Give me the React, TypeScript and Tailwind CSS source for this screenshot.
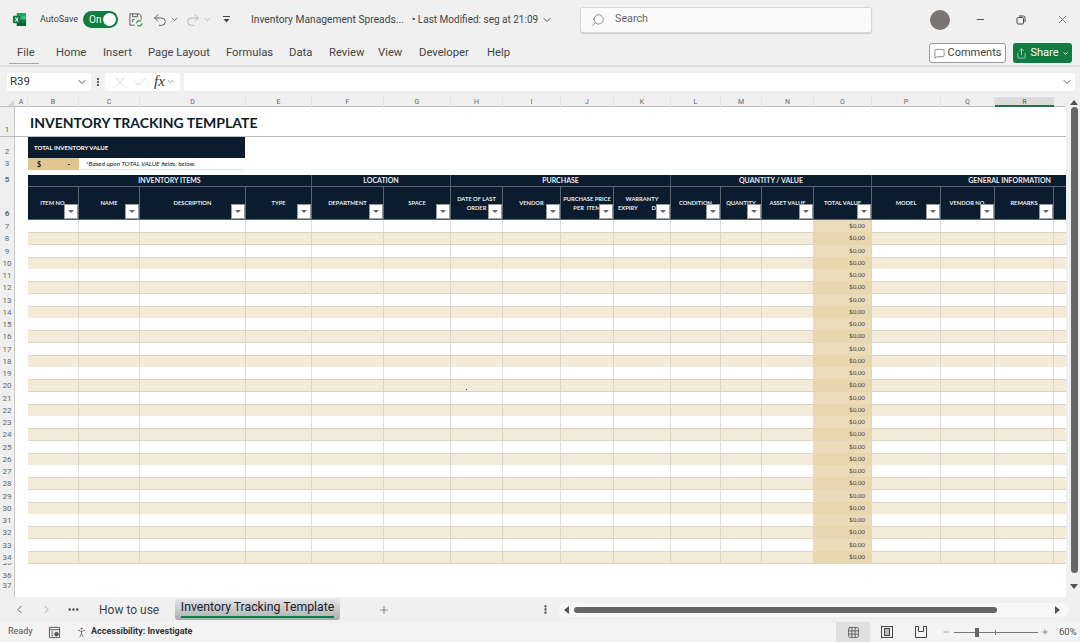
import {
  ChevronDown,
  ChevronLeft,
  ChevronRight,
  Check,
  Ellipsis,
  EllipsisVertical,
  Grid3x3,
  Minus,
  MessageSquare,
  PersonStanding,
  Plus,
  Redo2,
  Search,
  Share,
  Undo2,
  X,
} from 'lucide-react';

const ui = "font-['Roboto',sans-serif]";
const sheet = "font-['Lato',sans-serif]";
const cols =
  'grid grid-cols-[15px_13px_51px_61px_106px_66px_72px_67px_52px_58px_53px_57px_50px_41px_52px_58px_69px_54px_59px_12px]';

const letters = ['A', 'B', 'C', 'D', 'E', 'F', 'G', 'H', 'I', 'J', 'K', 'L', 'M', 'N', 'O', 'P', 'Q', 'R'];

const headers = [
  ['ITEM NO.'],
  ['NAME'],
  ['DESCRIPTION'],
  ['TYPE'],
  ['DEPARTMENT'],
  ['SPACE'],
  ['DATE OF LAST', 'ORDER'],
  ['VENDOR'],
  ['PURCHASE PRICE', 'PER  ITEM'],
  ['WARRANTY', 'EXPIRY          DATE'],
  ['CONDITION'],
  ['QUANTITY'],
  ['ASSET VALUE'],
  ['TOTAL VALUE'],
  ['MODEL'],
  ['VENDOR NO.'],
  ['REMARKS'],
];

const rowNumbers = Array.from({ length: 28 }, (_, i) => i + 7);

const RowNo = ({ n }: { n?: number }) => (
  <div className={`flex items-end justify-center overflow-hidden border-r border-[#c8c8c8] bg-[#efefef] pb-[1px] text-[8px] leading-[10px] text-[#666] ${ui}`}>
    {n}
  </div>
);

const FilterButton = () => (
  <span className="absolute bottom-0 right-0 flex h-[15px] w-[14px] items-center justify-center border border-[#9a9a9a] bg-white">
    <span className="h-0 w-0 border-x-[3px] border-t-[3px] border-x-transparent border-t-[#666]" />
  </span>
);

const ExcelLogo = () => (
  <svg width="15" height="15" viewBox="0 0 16 16">
    <path d="M5 1h9.5a.5.5 0 0 1 .5.5V8H5z" fill="#21a366" />
    <path d="M5 8h10v6.5a.5.5 0 0 1-.5.5H5z" fill="#0e5c2f" />
    <path d="M10 4.5h5V8h-5z" fill="#33c481" />
    <path d="M10 8h5v3.5h-5z" fill="#107c41" />
    <rect x="1" y="4" width="8" height="8" rx="1" fill="#107c41" />
    <path d="M3 5.8h1.2L5 7.2l.8-1.4H7L5.7 8 7 10.2H5.8L5 8.8l-.8 1.4H3L4.3 8z" fill="#fff" />
  </svg>
);

const SaveIcon = () => (
  <svg width="15" height="15" viewBox="0 0 16 16" fill="none" stroke="#555" strokeWidth="1">
    <path d="M7 14H2V2h10l2 2v4" />
    <path d="M5 2v3h5V2M5 11V8h2" />
    <path d="M9 12a3 3 0 0 1 5-2M15 12a3 3 0 0 1-5 2" stroke="#2f9e44" strokeWidth="1.3" />
  </svg>
);

const CustomizeIcon = () => (
  <svg width="9" height="9" viewBox="0 0 9 9" fill="none" stroke="#444">
    <path d="M1 1.5h7" />
    <path d="M1.5 4h6L4.5 7.5z" fill="#444" stroke="none" />
  </svg>
);

const RestoreIcon = () => (
  <svg width="10" height="10" viewBox="0 0 10 10" fill="none" stroke="#444">
    <rect x="1" y="2.5" width="6.5" height="6.5" rx="1.2" />
    <path d="M3 1h4.5A1.5 1.5 0 0 1 9 2.5V7" />
  </svg>
);

const MacroIcon = () => (
  <svg width="13" height="13" viewBox="0 0 14 14" fill="none" stroke="#555">
    <path d="M1.5 1.5h11v11h-11zM1.5 4h11" />
    <path d="M3.5 6.5h2M3.5 8.5h2M3.5 10.5h2" />
    <circle cx="9.2" cy="8.8" r="2" fill="#555" />
  </svg>
);

const PageLayoutIcon = () => (
  <svg width="14" height="14" viewBox="0 0 14 14" fill="none" stroke="#444">
    <rect x="1.5" y="1.5" width="11" height="11" />
    <rect x="4.5" y="3.5" width="5" height="7" fill="#bbb" />
  </svg>
);

const PageBreakIcon = () => (
  <svg width="14" height="14" viewBox="0 0 14 14" fill="none" stroke="#444">
    <path d="M1.5 12.5v-11h3v5h5v-5h3v11z" />
  </svg>
);

export default function App() {
  return (
    <div className={`flex h-[642px] w-[1080px] flex-col overflow-hidden bg-[#f0f0f0] text-[#333] ${ui}`}>
      {/* title bar */}
      <div className="flex h-[38px] shrink-0 items-center pt-[1px]">
        <span className="ml-[12px] w-[28px]"><ExcelLogo /></span>
        <span className="w-[43px] text-[9px] text-[#444]">AutoSave</span>
        <span className="flex h-[17px] w-[35px] items-center justify-between rounded-full bg-[#107c41] pl-[6px] pr-[2px] text-[10px] text-white">
          On
          <span className="h-[13px] w-[13px] rounded-full bg-white" />
        </span>
        <span className="ml-[10px] w-[17px]"><SaveIcon /></span>
        <Undo2 className="ml-[7px] h-[16px] w-[16px] text-[#444]" strokeWidth={1.2} />
        <ChevronDown className="ml-[2px] h-[9px] w-[9px] text-[#444]" />
        <Redo2 className="ml-[6px] h-[16px] w-[16px] text-[#aaa]" strokeWidth={1.2} />
        <ChevronDown className="ml-[2px] h-[9px] w-[9px] text-[#aaa]" />
        <span className="ml-[10px]"><CustomizeIcon /></span>
        <span className="ml-[20px] w-[161px] whitespace-nowrap text-[10.25px] text-[#444]">Inventory Management Spreads...</span>
        <span className="w-[129px] whitespace-nowrap text-[10px] text-[#444]">• Last Modified: seg at 21:09</span>
        <ChevronDown className="h-[12px] w-[12px] text-[#444]" />
        <div className="ml-[27px] flex h-[26px] w-[292px] items-center rounded-[3px] border border-[#d8d8d8] bg-[#fafafa] pl-[10px] text-[10.75px] text-[#666] shadow-[0_1px_1px_#ccc]">
          <Search className="h-[14px] w-[14px] -scale-x-100 text-[#666]" strokeWidth={1.2} />
          <span className="ml-[10px]">Search</span>
        </div>
        <span className="ml-[58px] h-[20px] w-[20px] rounded-full bg-[#7a7472]" />
        <Minus className="ml-[25px] h-[11px] w-[11px] text-[#444]" />
        <span className="ml-[30px]"><RestoreIcon /></span>
        <X className="ml-[30px] h-[13px] w-[13px] text-[#444]" strokeWidth={1.3} />
      </div>

      {/* ribbon tabs */}
      <div className="flex h-[28px] shrink-0 items-center border-b border-[#dcdcdc] pt-[3px] text-[11.25px] text-[#444] shadow-[0_1px_2px_#ddd]">
        <span className="relative ml-[17px] w-[39px] whitespace-nowrap">
          File
          <span className="absolute -left-[8px] right-[17px] -bottom-[3px] h-[1px] bg-[#aaa]" />
        </span>
        <span className="w-[47px]">Home</span>
        <span className="w-[45px]">Insert</span>
        <span className="w-[78px]">Page Layout</span>
        <span className="w-[63px]">Formulas</span>
        <span className="w-[40px]">Data</span>
        <span className="w-[49px]">Review</span>
        <span className="w-[41px]">View</span>
        <span className="w-[68px]">Developer</span>
        <span>Help</span>
        <div className="ml-auto mr-[8px] -mt-[1px] flex items-center gap-[7px]">
          <span className="flex h-[20px] w-[77px] items-center justify-center gap-[3px] rounded-[3px] border border-[#999] bg-white pt-[1px] text-[11px]">
            <MessageSquare className="h-[11px] w-[11px]" strokeWidth={1.3} />
            Comments
          </span>
          <span className="flex h-[20px] w-[59px] items-center justify-center gap-[3px] rounded-[3px] bg-[#107c41] pt-[1px] text-[11px] text-white">
            <Share className="h-[11px] w-[11px]" strokeWidth={1.3} />
            Share
            <ChevronDown className="h-[7px] w-[7px]" strokeWidth={3} />
          </span>
        </div>
      </div>

      {/* formula bar */}
      <div className="flex h-[31px] shrink-0 items-center pl-[7px] pr-[5px]">
        <div className="flex h-[18px] w-[84px] items-center justify-between rounded-[2px] bg-white pl-[3px] pr-[3px] text-[11.5px] text-[#333]">
          R39
          <ChevronDown className="h-[12px] w-[12px] text-[#555]" />
        </div>
        <EllipsisVertical className="mx-[2px] h-[10px] w-[10px] text-[#333]" strokeWidth={3} />
        <div className="flex h-[18px] w-[75px] items-center rounded-[2px] bg-white pl-[7px]">
          <X className="h-[16px] w-[16px] text-[#c4c4c4]" strokeWidth={1} />
          <Check className="ml-[4px] h-[16px] w-[16px] text-[#c4c4c4]" strokeWidth={1} />
          <span className="ml-[6px] font-['Liberation_Serif',serif] text-[15px] italic text-[#333]">fx</span>
          <ChevronDown className="ml-[1px] h-[9px] w-[9px] text-[#777]" />
        </div>
        <div className="ml-[4px] flex h-[18px] flex-1 items-center justify-end rounded-[2px] bg-white pr-[2px]">
          <ChevronDown className="h-[12px] w-[12px] text-[#555]" />
        </div>
      </div>

      {/* sheet */}
      <div className="flex h-[500px] shrink-0 overflow-hidden">
        <div className="flex w-[1066px] flex-col overflow-hidden bg-white">
          <div className={`${cols} h-[10px] shrink-0 border-b border-[#c0c0c0] bg-[#efefef] text-[7px] leading-[10px] text-[#666]`}>
            <span className="flex items-end justify-end pb-[1px] pr-[1px]">
              <span className="h-0 w-0 border-b-[6px] border-l-[6px] border-b-[#d4d4d4] border-l-transparent" />
            </span>
            {letters.map((l) => (
              <span
                key={l}
                className={l === 'R' ? 'h-[10px] border-b-2 border-[#217346] bg-[#dcdcdc] text-center text-[#217346]' : 'border-r border-[#e2e2e2] text-center'}
              >
                {l}
              </span>
            ))}
            <span />
          </div>

          <div className={`${sheet} text-[#0a1c2e]`}>
            <div className={`${cols} h-[30px] border-b border-[#bdbdbd]`}>
              <RowNo n={1} />
              <div className="col-span-19 flex items-center pl-[15px] pt-[1px] text-[14px] font-bold">
                INVENTORY TRACKING TEMPLATE
              </div>
            </div>
            <div className={`${cols} h-[21px]`}>
              <RowNo n={2} />
              <span />
              <div className="col-span-3 mr-[1px] flex items-center bg-[#0a1c2e] pl-[6px] text-[6px] font-bold text-white">
                TOTAL INVENTORY VALUE
              </div>
            </div>
            <div className={`${cols} h-[12px]`}>
              <RowNo n={3} />
              <span />
              <div className="flex items-center justify-between bg-[#dfc58f] pl-[9px] pr-[9px] text-[7px] font-bold">
                <span>$</span>
                <span>-</span>
              </div>
              <div className="col-span-2 mr-[1px] flex items-center whitespace-nowrap border-b border-[#e4e4e4] pl-[7px] text-[6.5px] italic">
                *Based upon TOTAL VALUE fields, below.
              </div>
            </div>
            <div className={`${cols} h-[5px]`}>
              <RowNo />
            </div>

            <div className={`${cols} h-[11px] text-[7px] font-bold leading-[11px] text-[#e8edf2]`}>
              <RowNo n={5} />
              <span />
              <div className="col-span-4 border-r border-[#4d5a68] bg-[#0a1c2e] text-center">INVENTORY ITEMS</div>
              <div className="col-span-2 border-r border-[#4d5a68] bg-[#0a1c2e] text-center">LOCATION</div>
              <div className="col-span-4 border-r border-[#4d5a68] bg-[#0a1c2e] text-center">PURCHASE</div>
              <div className="col-span-4 border-r border-[#4d5a68] bg-[#0a1c2e] text-center">QUANTITY / VALUE</div>
              <div className="col-span-4 bg-[#0a1c2e] pr-[15px] text-right">GENERAL INFORMATION</div>
            </div>

            <div className={`${cols} h-[34px] text-[5.75px] font-bold leading-[9px] text-[#e8edf2]`}>
              <RowNo n={6} />
              <span />
              {headers.map((h) => (
                <div
                  key={h[0]}
                  className="relative flex flex-col items-center justify-center overflow-hidden whitespace-pre border-r border-t border-b border-[#5a6570] bg-[#0a1c2e] pb-[1px]"
                >
                  {h.map((line) => (
                    <span key={line}>{line}</span>
                  ))}
                  <FilterButton />
                </div>
              ))}
              <div className="border-t border-b border-[#5a6570] bg-[#0a1c2e]" />
            </div>

            {rowNumbers.map((n, i) => (
              <div key={n} className={`${cols} h-[12.25px]`}>
                <RowNo n={n} />
                <span />
                {headers.map((h, c) =>
                  c === 13 ? (
                    <div
                      key={h[0]}
                      className={`border-b border-r border-[#e0d5bd] pr-[6px] text-right text-[6.25px] leading-[12px] text-[#444] ${i % 2 ? 'bg-[#e8d6ae]' : 'bg-[#ebdbb9]'}`}
                    >
                      $0,00
                    </div>
                  ) : (
                    <div
                      key={h[0]}
                      className={`relative border-r ${i % 2 ? 'border-y border-[#dcd4c4] bg-[#f3ead8]' : 'border-[#dedede] bg-white'}`}
                    >
                      {n === 20 && c === 6 && <span className="absolute left-[15px] top-[9px] h-[1px] w-[1px] bg-[#2233cc]" />}
                    </div>
                  ),
                )}
                <div className={i % 2 ? 'border-y border-[#dcd4c4] bg-[#f3ead8]' : 'bg-white'} />
              </div>
            ))}

            <div className={`${cols} h-[6px]`}><RowNo n={35} /></div>
            <div className={`${cols} h-[13px]`}><RowNo n={36} /></div>
            <div className={`${cols} h-[10px]`}><RowNo n={37} /></div>
            <div className={`${cols} h-[5px]`}><RowNo /></div>
          </div>
        </div>

        {/* vertical scrollbar */}
        <div className="flex w-[14px] flex-col items-center pl-[2px] pt-[3px]">
          <span className="h-0 w-0 border-x-[4px] border-b-[5px] border-x-transparent border-b-[#555]" />
          <span className="mt-[2px] h-[466px] w-[7px] rounded-full bg-[#666]" />
          <span className="mt-[11px] h-0 w-0 border-x-[4px] border-t-[5px] border-x-transparent border-t-[#555]" />
        </div>
      </div>

      {/* sheet tabs */}
      <div className="flex h-[25px] shrink-0 items-center">
        <ChevronLeft className="ml-[13px] h-[13px] w-[13px] text-[#444]" strokeWidth={1.5} />
        <ChevronRight className="ml-[14px] h-[13px] w-[13px] text-[#999]" strokeWidth={1.5} />
        <Ellipsis className="ml-[14px] h-[13px] w-[13px] text-[#444]" strokeWidth={2.5} />
        <span className="ml-[19px] w-[76px] whitespace-nowrap text-[12px] text-[#444]">How to use</span>
        <span className="relative flex h-[21px] w-[165px] items-start justify-center whitespace-nowrap rounded-[3px] bg-gradient-to-b from-[#e4e4e6] to-[#a9adb2] text-[12.25px] leading-[16px] text-[#222]">
          Inventory Tracking Template
          <span className="absolute bottom-[2px] left-[6px] right-[6px] h-[2px] bg-[#107c41]" />
        </span>
        <Plus className="ml-[38px] h-[12px] w-[12px] text-[#555]" strokeWidth={1.3} />
        <EllipsisVertical className="ml-[150px] h-[11px] w-[11px] text-[#333]" strokeWidth={3} />
        <div className="ml-[8px] flex h-[14px] w-[510px] items-center rounded-full bg-[#f7f7f7] pl-[5px]">
          <span className="h-0 w-0 border-y-[4px] border-r-[5px] border-y-transparent border-r-[#555]" />
          <span className="ml-[5px] h-[6px] w-[423px] rounded-full bg-[#666]" />
          <span className="ml-[58px] h-0 w-0 border-y-[4px] border-l-[5px] border-y-transparent border-l-[#555]" />
        </div>
      </div>

      {/* status bar */}
      <div className="flex h-[20px] shrink-0 items-center bg-[#f3f3f3] text-[9px] text-[#555]">
        <span className="ml-[8px] w-[40px]">Ready</span>
        <MacroIcon />
        <PersonStanding className="ml-[14px] h-[13px] w-[13px] text-[#444]" strokeWidth={1.2} />
        <span className="ml-[3px] font-bold text-[#333]">Accessibility: Investigate</span>
        <div className="ml-auto flex h-[20px] w-[34px] items-center justify-center bg-[#e0e0e0]">
          <Grid3x3 className="h-[13px] w-[13px] text-[#333]" strokeWidth={1.2} />
        </div>
        <span className="ml-[10px]"><PageLayoutIcon /></span>
        <span className="ml-[20px]"><PageBreakIcon /></span>
        <Minus className="ml-[14px] h-[8px] w-[8px] text-[#888]" />
        <div className="relative ml-[4px] h-[1px] w-[84px] bg-[#777]">
          <span className="absolute left-[21px] -top-[4px] h-[9px] w-[4px] bg-[#666]" />
          <span className="absolute left-[41px] -top-[2px] h-[5px] w-[1px] bg-[#777]" />
        </div>
        <Plus className="ml-[3px] h-[8px] w-[8px] text-[#666]" />
        <span className="ml-[10px] mr-[5px] w-[16px] whitespace-nowrap text-[9.5px] text-[#555]">60%</span>
      </div>
    </div>
  );
}
